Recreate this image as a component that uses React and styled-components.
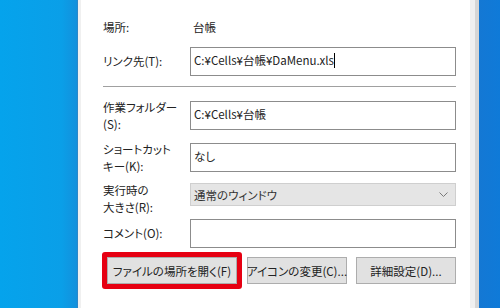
import React from "react";
import styled, { createGlobalStyle } from "styled-components";

const GlobalStyle = createGlobalStyle`
  html, body {
    margin: 0;
    padding: 0;
    overflow: hidden;
  }
  body {
    font-family: "Noto Sans CJK JP", "Noto Sans", sans-serif;
    font-size: 11.5px;
    color: #222;
  }
`;

const Desktop = styled.div`
  display: flex;
  width: 500px;
  height: 308px;
  overflow: hidden;
`;

const DesktopLeft = styled.div`
  width: 77px;
  flex: none;
  background: linear-gradient(90deg, #05a3ec 0%, #0a9fe8 80%, #1390dc 100%);
`;

const DesktopRight = styled.div`
  flex: 1;
  background: linear-gradient(90deg, #1478d4 0%, #0f7ad8 100%);
`;

const Window = styled.div`
  display: flex;
  flex: none;
  background: #f0f0f0;
  border-left: 1px solid #2c86c8;
  border-right: 4px solid #d6d6d6;
  padding: 0 5px 0 3px;
`;

const Page = styled.div`
  width: 389px;
  background: #ffffff;
  padding: 18px 14px 0 22px;
  box-sizing: border-box;
  display: flex;
  flex-direction: column;
  font-feature-settings: "palt";
`;

const Row = styled.div`
  display: flex;
  align-items: center;
  height: ${(p) => p.$h}px;
  margin-top: ${(p) => p.$top || 0}px;
`;

const Label = styled.div`
  width: 87px;
  flex: none;
  line-height: 17px;
  margin-top: ${(p) => p.$drop || 0}px;
`;

const Value = styled.div`
  padding-left: 3px;
  line-height: 17px;
`;

const TextBox = styled.div`
  flex: 1;
  height: 100%;
  box-sizing: border-box;
  border: 1px solid #8c8c8c;
  background: #fff;
  padding: 4px 3px 0;
  line-height: 17px;
  white-space: nowrap;
`;

const Caret = styled.span`
  display: inline-block;
  width: 1px;
  height: 15px;
  background: #000;
  vertical-align: -3px;
`;

const Select = styled.div`
  flex: 1;
  height: 100%;
  box-sizing: border-box;
  border: 1px solid #cfcfcf;
  background: #e5e5e5;
  display: flex;
  align-items: center;
  justify-content: space-between;
  padding: 0 7px 0 3px;
  color: #333;
`;

const Separator = styled.div`
  height: 1px;
  background: #a0a0a0;
  margin-top: 10px;
`;

const ButtonRow = styled.div`
  display: flex;
  align-items: center;
  height: 27px;
  margin-top: 9px;
  padding-left: 4px;
  gap: 10px;
`;

const Highlight = styled.div`
  display: flex;
  margin: -5px;
  border: 5px solid #e60012;
  border-radius: 3px;
`;

const Button = styled.div`
  width: ${(p) => p.$w}px;
  height: 27px;
  box-sizing: border-box;
  border: 1px solid #adadad;
  background: #e1e1e1;
  display: flex;
  align-items: center;
  justify-content: center;
  white-space: nowrap;
  margin-left: ${(p) => p.$ml || 0}px;
`;

const Chevron = () => (
  <svg width="9" height="6" viewBox="0 0 9 6">
    <path d="M0.5 0.5 L4.5 4.5 L8.5 0.5" fill="none" stroke="#7a7a7a" strokeWidth="1" />
  </svg>
);

export default function App() {
  return (
    <>
      <GlobalStyle />
      <Desktop>
        <DesktopLeft />
        <Window>
          <Page>
            <Row $h={18}>
              <Label>場所:</Label>
              <Value>台帳</Value>
            </Row>
            <Row $h={29} $top={11}>
              <Label>リンク先(T):</Label>
              <TextBox>
                C:¥Cells¥台帳¥DaMenu.xls
                <Caret />
              </TextBox>
            </Row>
            <Separator />
            <Row $h={29} $top={14}>
              <Label>
                作業フォルダー
                <br />
                (S):
              </Label>
              <TextBox>C:¥Cells¥台帳</TextBox>
            </Row>
            <Row $h={29} $top={13}>
              <Label>
                ショートカット
                <br />
                キー(K):
              </Label>
              <TextBox>なし</TextBox>
            </Row>
            <Row $h={23} $top={11}>
              <Label $drop={8}>
                実行時の
                <br />
                大きさ(R):
              </Label>
              <Select>
                <span>通常のウィンドウ</span>
                <Chevron />
              </Select>
            </Row>
            <Row $h={29} $top={13}>
              <Label>コメント(O):</Label>
              <TextBox />
            </Row>
            <ButtonRow>
              <Highlight>
                <Button $w={130}>ファイルの場所を開く(F)</Button>
              </Highlight>
              <Button $w={100}>アイコンの変更(C)...</Button>
              <Button $w={100} $ml={-1}>詳細設定(D)...</Button>
            </ButtonRow>
          </Page>
        </Window>
        <DesktopRight />
      </Desktop>
    </>
  );
}
